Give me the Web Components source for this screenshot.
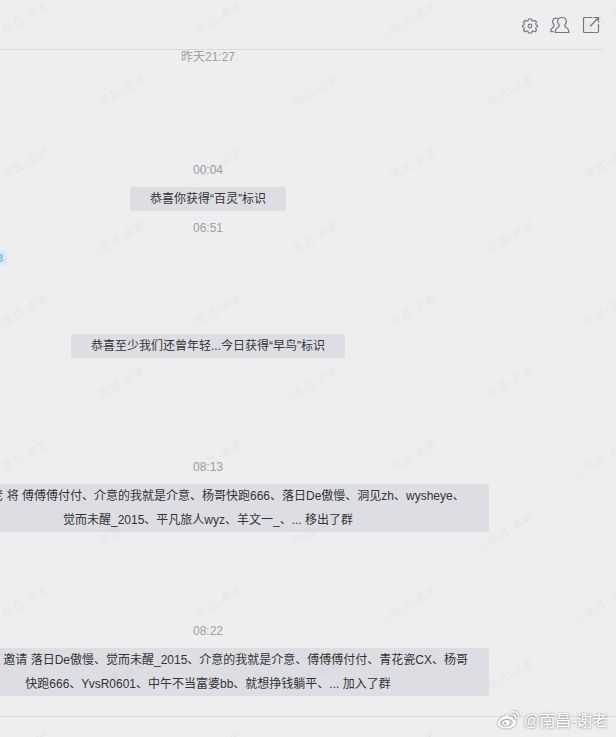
<!DOCTYPE html>
<html lang="zh-CN">
<head>
<meta charset="UTF-8">
<title>群聊</title>
<style>
    body {
        margin: 0;
        overflow: hidden;
        background: #eeeeee;
        font-family: "Liberation Sans", Arial, "Noto Sans CJK SC", sans-serif;
        font-size: 12px;
    }
</style>
</head>
<body>
<chat-window>
    <chat-header slot="header"></chat-header>
    <chat-time style="--gap: -5px">昨天21:27</chat-time>
    <chat-time style="--gap: 89px">00:04</chat-time>
    <chat-notice style="--gap: 5px">恭喜你获得“百灵”标识</chat-notice>
    <chat-time style="--gap: 5px">06:51</chat-time>
    <user-badge style="--gap: 11px">3</user-badge>
    <chat-notice style="--gap: 69px">恭喜至少我们还曾年轻...今日获得“早鸟”标识</chat-notice>
    <chat-time style="--gap: 97px">08:13</chat-time>
    <chat-notice wide style="--gap: 5px">南昌-谢老 将 傅傅傅付付、介意的我就是介意、杨哥快跑666、落日De傲慢、洞见zh、wysheye、<br>觉而未醒_2015、平凡旅人wyz、羊文一_、... 移出了群</chat-notice>
    <chat-time style="--gap: 87px">08:22</chat-time>
    <chat-notice wide style="--gap: 5px">南昌-谢老 邀请 落日De傲慢、觉而未醒_2015、介意的我就是介意、傅傅傅付付、青花瓷CX、杨哥<br>快跑666、YvsR0601、中午不当富婆bb、就想挣钱躺平、... 加入了群</chat-notice>
    <page-watermark slot="overlay" text="@南昌-谢老"></page-watermark>
    <weibo-sign slot="overlay">@南昌-谢老</weibo-sign>
</chat-window>

<script>
// Whole chat pane: header, message list, input border
class ChatWindow extends HTMLElement {
    constructor() {
        super();
        this.attachShadow({ mode: 'open' });
        this.shadowRoot.innerHTML = `
            <style>
                :host {
                    display: flex;
                    flex-direction: column;
                    position: relative;
                    height: 737px;
                    overflow: hidden;
                }

                .messages {
                    display: flex;
                    flex-direction: column;
                    align-items: center;
                    box-sizing: border-box;
                    width: 562px;
                    height: 666px;
                    margin-left: -73px;
                }

                .editor {
                    flex: 1;
                    border-top: 1px solid #dcdcdd;
                }
            </style>
            <slot name="header"></slot>
            <div class="messages"><slot></slot></div>
            <div class="editor"></div>
            <slot name="overlay"></slot>
        `;
    }
}

// Top bar with the three action icons
class ChatHeader extends HTMLElement {
    constructor() {
        super();
        this.attachShadow({ mode: 'open' });
        this.shadowRoot.innerHTML = `
            <style>
                :host {
                    display: flex;
                    justify-content: flex-end;
                    align-items: center;
                    gap: 10px;
                    box-sizing: border-box;
                    height: 50px;
                    margin-right: 13px;
                    padding-right: 3px;
                    border-bottom: 1px solid #d9d9da;
                }

                svg {
                    display: block;
                    fill: none;
                    stroke: #747786;
                    stroke-width: 1.2;
                    stroke-linejoin: round;
                    stroke-linecap: round;
                }
            </style>
            <svg width="18" height="19" viewBox="0 0 18 19">
                <g transform="translate(9 11) scale(.94) translate(-9 -11)">
                    <path d="M7.400 3.500h3.200l.5 1.900 1.500.6 1.700-1 1.700 1.700-1 1.700.6 1.500 1.400.5v1.400l-1.400.5-.6 1.500 1 1.700-1.700 1.700-1.700-1-1.500.6-.5 1.700H7.400l-.5-1.700-1.500-.6-1.700 1L2 15.500l1-1.700-.6-1.500-1.400-.5v-1.400l1.400-.5.6-1.500-1-1.700L3.700 5l1.700 1 1.500-.6z"/>
                    <circle cx="9" cy="11" r="2"/>
                </g>
            </svg>
            <svg width="21" height="19" viewBox="0 0 21 19">
                <path d="M13 2.500c2.800 0 4.500 1.700 4.400 4.200-.1 1.900-1.800 2.700-1.600 4.200.2 1.600 3 1.500 3.700 4.200l.3 2.400H6.200l.3-2.400c.7-2.700 3.500-2.600 3.700-4.200.2-1.500-1.500-2.300-1.600-4.200-.1-2.500 1.600-4.200 4.400-4.200z"/>
                <path d="M8.300 3.300C5.400 2.700 3.500 4.200 3.600 6.700c.1 1.900 1.700 2.500 1.500 4-.2 1.700-2.500 2-3.100 4.200l-.2 1.800h2.300"/>
            </svg>
            <svg width="18" height="19" viewBox="0 0 18 19" style="margin-left: 2px">
                <path d="M10 2.500H2.500a1 1 0 0 0-1 1v13a1 1 0 0 0 1 1h13a1 1 0 0 0 1-1V9.500M12 2.500h4.500V7M16 3L8.500 11"/>
            </svg>
        `;
    }
}

// Time label between messages
class ChatTime extends HTMLElement {
    constructor() {
        super();
        this.attachShadow({ mode: 'open' });
        this.shadowRoot.innerHTML = `
            <style>
                :host {
                    display: block;
                    margin-top: var(--gap, 0);
                    color: #9c9ea8;
                    line-height: 24px;
                    white-space: nowrap;
                }
            </style>
            <slot></slot>
        `;
    }
}

// Grey system notice
class ChatNotice extends HTMLElement {
    constructor() {
        super();
        this.attachShadow({ mode: 'open' });
        this.shadowRoot.innerHTML = `
            <style>
                :host {
                    display: block;
                    box-sizing: border-box;
                    margin-top: var(--gap, 0);
                    padding: 0 20px;
                    border-radius: 2px;
                    background: #dddee3;
                    color: #333333;
                    line-height: 24px;
                    text-align: center;
                    white-space: nowrap;
                }

                :host([wide]) {
                    width: 100%;
                }
            </style>
            <slot></slot>
        `;
    }
}

// Small tag beside a member's name
class UserBadge extends HTMLElement {
    constructor() {
        super();
        this.attachShadow({ mode: 'open' });
        this.shadowRoot.innerHTML = `
            <style>
                :host {
                    display: block;
                    align-self: flex-start;
                    box-sizing: border-box;
                    width: 80px;
                    height: 14px;
                    margin-top: var(--gap, 0);
                    padding-right: 4px;
                    border-radius: 2px;
                    background: #d9e8f2;
                    color: #6fbdf0;
                    font-size: 10px;
                    font-weight: bold;
                    line-height: 15px;
                    text-align: right;
                }
            </style>
            <slot></slot>
        `;
    }
}

// Faint diagonal marks laid over the whole window
class PageWatermark extends HTMLElement {
    constructor() {
        super();
        this.attachShadow({ mode: 'open' });
    }

    connectedCallback() {
        const text = this.getAttribute('text');
        let marks = '';
        for (let row = 0; row < 11; row++) {
            for (let col = 0; col < 4; col++) {
                const x = 20 + col * 194 + (row % 2 ? 97 : 0);
                const y = 21 + row * 73;
                if (x > 660) continue;
                marks += `<text transform="translate(${x} ${y}) rotate(-30)" y="4">${text}</text>`;
            }
        }
        this.shadowRoot.innerHTML = `
            <style>
                :host {
                    position: absolute;
                    inset: 0;
                    pointer-events: none;
                }

                text {
                    fill: #000000;
                    fill-opacity: 0.035;
                    font-size: 12px;
                    font-weight: bold;
                    text-anchor: middle;
                }
            </style>
            <svg width="616" height="737">${marks}</svg>
        `;
    }
}

// Weibo signature in the corner
class WeiboSign extends HTMLElement {
    constructor() {
        super();
        this.attachShadow({ mode: 'open' });
        this.shadowRoot.innerHTML = `
            <style>
                :host {
                    position: absolute;
                    right: 8px;
                    bottom: 4px;
                    display: flex;
                    align-items: center;
                    gap: 4px;
                    color: #ffffff;
                    font-size: 15.8px;
                    line-height: 24px;
                    white-space: nowrap;
                    text-shadow: 0 0 2px rgba(0, 0, 0, 0.35), 0 1px 3px rgba(0, 0, 0, 0.2);
                }

                svg {
                    display: block;
                    margin-top: -2px;
                    filter: drop-shadow(0 0 1px rgba(0, 0, 0, 0.5));
                }
            </style>
            <svg width="23" height="20" viewBox="0 0 24 20">
                <path fill="#fff" fill-rule="evenodd" d="M9.500 5.200c1.800-.8 3.300-.2 2.900 1.900 2.700-1 5-.5 4.400 2 2.500.7 3.400 2.400 2.800 4.200-1 3.300-5 5.500-9.700 5.500-5 0-8.900-2.300-8.900-5.700 0-2.800 4.200-6.600 8.500-7.900zM9.700 9c-4 .2-6.800 2.400-6.600 4.600.2 2.300 3.300 3.600 7 3.300 3.900-.3 6.600-2.400 6.400-4.800C16.300 9.800 13.500 8.700 9.700 9z"/>
                <path fill="#fff" fill-rule="evenodd" d="M9.500 10c-2.600.3-4.200 2-3.800 3.900.4 1.700 2.200 2.500 4.200 2.100 2.200-.4 3.700-2.200 3.300-4-.3-1.500-1.900-2.200-3.700-2zM8.300 12.400a1.400 1.200 0 1 0 .1 2.400 1.400 1.200 0 0 0-.1-2.400z"/>
                <path fill="none" stroke="#fff" stroke-width="1.500" stroke-linecap="round" d="M16.200 1.500c4-.7 7 2.600 5.800 6.500M16.800 4.700c1.700-.2 2.800 1 2.300 2.600"/>
            </svg>
            <slot></slot>
        `;
    }
}

customElements.define('chat-window', ChatWindow);
customElements.define('chat-header', ChatHeader);
customElements.define('chat-time', ChatTime);
customElements.define('chat-notice', ChatNotice);
customElements.define('user-badge', UserBadge);
customElements.define('page-watermark', PageWatermark);
customElements.define('weibo-sign', WeiboSign);
</script>
</body>
</html>
